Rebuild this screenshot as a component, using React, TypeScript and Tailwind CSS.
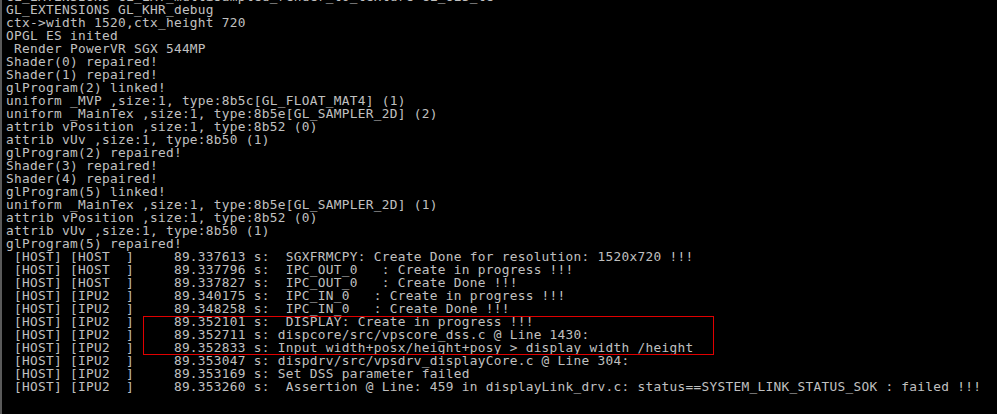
const lines: string[] = [
  'GL_EXTENSIONS GL_EXT_multisampled_render_to_texture GL_OES_te',
  'GL_EXTENSIONS GL_KHR_debug',
  'ctx->width 1520,ctx_height 720',
  'OPGL ES inited',
  ' Render PowerVR SGX 544MP',
  'Shader(0) repaired!',
  'Shader(1) repaired!',
  'glProgram(2) linked!',
  'uniform _MVP ,size:1, type:8b5c[GL_FLOAT_MAT4] (1)',
  'uniform _MainTex ,size:1, type:8b5e[GL_SAMPLER_2D] (2)',
  'attrib vPosition ,size:1, type:8b52 (0)',
  'attrib vUv ,size:1, type:8b50 (1)',
  'glProgram(2) repaired!',
  'Shader(3) repaired!',
  'Shader(4) repaired!',
  'glProgram(5) linked!',
  'uniform _MainTex ,size:1, type:8b5e[GL_SAMPLER_2D] (1)',
  'attrib vPosition ,size:1, type:8b52 (0)',
  'attrib vUv ,size:1, type:8b50 (1)',
  'glProgram(5) repaired!',
  ' [HOST] [HOST  ]     89.337613 s:  SGXFRMCPY: Create Done for resolution: 1520x720 !!!',
  ' [HOST] [HOST  ]     89.337796 s:  IPC_OUT_0   : Create in progress !!!',
  ' [HOST] [HOST  ]     89.337827 s:  IPC_OUT_0   : Create Done !!!',
  ' [HOST] [IPU2  ]     89.340175 s:  IPC_IN_0   : Create in progress !!!',
  ' [HOST] [IPU2  ]     89.348258 s:  IPC_IN_0   : Create Done !!!',
  ' [HOST] [IPU2  ]     89.352101 s:  DISPLAY: Create in progress !!!',
  ' [HOST] [IPU2  ]     89.352711 s: dispcore/src/vpscore_dss.c @ Line 1430:',
  ' [HOST] [IPU2  ]     89.352833 s: Input width+posx/height+posy > display width /height',
  ' [HOST] [IPU2  ]     89.353047 s: dispdrv/src/vpsdrv_displayCore.c @ Line 304:',
  ' [HOST] [IPU2  ]     89.353169 s: Set DSS parameter failed',
  ' [HOST] [IPU2  ]     89.353260 s:  Assertion @ Line: 459 in displayLink_drv.c: status==SYSTEM_LINK_STATUS_SOK : failed !!!',
];

export default function App() {
  return (
    <div className="relative h-[414px] w-[997px] overflow-hidden border-l-2 border-[#5a5a5a] bg-black">
      <div
        className="-mt-[10px] flex flex-col pl-[4px] text-[12.8px] leading-[13px] tracking-[0.29px] text-[#c0c0c0]"
        style={{ fontFamily: '"DejaVu Sans Mono", "Liberation Mono", monospace' }}
      >
        {lines.map((line, i) => (
          <div key={i} className="h-[13px] whitespace-pre">
            {line}
          </div>
        ))}
      </div>

      {/* annotation box */}
      <div className="absolute left-[141px] top-[316px] h-[39px] w-[571px] border border-[#e00000]" />
    </div>
  );
}
